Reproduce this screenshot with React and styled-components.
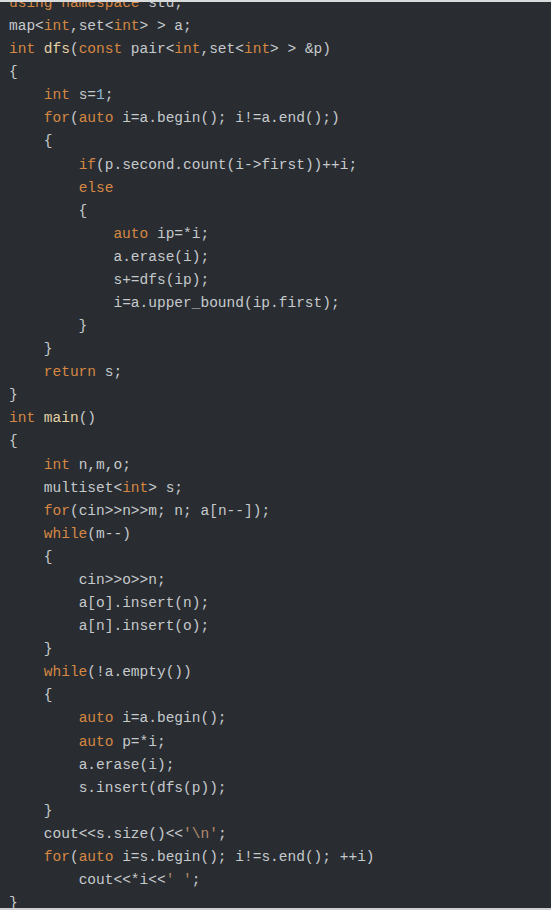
import styled, { createGlobalStyle } from "styled-components";

const source = `using namespace std;
map<int,set<int> > a;
int dfs(const pair<int,set<int> > &p)
{
    int s=1;
    for(auto i=a.begin(); i!=a.end();)
    {
        if(p.second.count(i->first))++i;
        else
        {
            auto ip=*i;
            a.erase(i);
            s+=dfs(ip);
            i=a.upper_bound(ip.first);
        }
    }
    return s;
}
int main()
{
    int n,m,o;
    multiset<int> s;
    for(cin>>n>>m; n; a[n--]);
    while(m--)
    {
        cin>>o>>n;
        a[o].insert(n);
        a[n].insert(o);
    }
    while(!a.empty())
    {
        auto i=a.begin();
        auto p=*i;
        a.erase(i);
        s.insert(dfs(p));
    }
    cout<<s.size()<<'\\n';
    for(auto i=s.begin(); i!=s.end(); ++i)
        cout<<*i<<' ';
}`;

const keywords = new Set([
  "using",
  "namespace",
  "int",
  "const",
  "for",
  "auto",
  "if",
  "else",
  "return",
  "while",
]);

// split a line into coloured pieces
const tokenize = (line) => {
  const parts = line.match(/'[^']*'|\d+|[A-Za-z_]\w*|[^\w']+/g) || [];
  return parts.map((text, i) => {
    let kind = "plain";
    if (keywords.has(text)) kind = "keyword";
    else if (/^\d+$/.test(text)) kind = "number";
    else if (text.startsWith("'")) kind = "string";
    else if (
      /^[A-Za-z_]/.test(text) &&
      parts[i - 2] === "int" &&
      (parts[i + 1] || "").startsWith("(")
    )
      kind = "func";
    return { text, kind };
  });
};

const colors = {
  plain: "#c6cacd",
  keyword: "#d68743",
  number: "#8fb8d8",
  string: "#b08a6c",
  func: "#e4d2a6",
};

const App = () => {
  const lines = source.split("\n");
  return (
    <>
      <GlobalStyle />
      <Frame>
        <Code>
          {lines.map((line, n) => (
            <Line key={n}>
              {line.length === 0
                ? " "
                : tokenize(line).map((t, i) => (
                    <Token key={i} $kind={t.kind}>
                      {t.text}
                    </Token>
                  ))}
            </Line>
          ))}
        </Code>
      </Frame>
    </>
  );
};

const GlobalStyle = createGlobalStyle`
  html, body {
    margin: 0;
    padding: 0;
    background: #292d31;
  }
`;

const Frame = styled.div`
  box-sizing: border-box;
  height: 910px;
  background: #292d31;
  border-top: 2px solid #d9dadb;
  border-bottom: 2px solid #cfd0d1;
  overflow: hidden;
`;

const Code = styled.pre`
  margin: -10px 0 0;
  padding: 0 9px;
  font-family: "Liberation Mono", "DejaVu Sans Mono", monospace;
  font-size: 14.5px;
  line-height: 23.08px;
  color: ${colors.plain};
  white-space: pre;
`;

const Line = styled.div`
  height: 23.08px;
`;

const Token = styled.span`
  color: ${({ $kind }) => colors[$kind]};
`;

export default App;
